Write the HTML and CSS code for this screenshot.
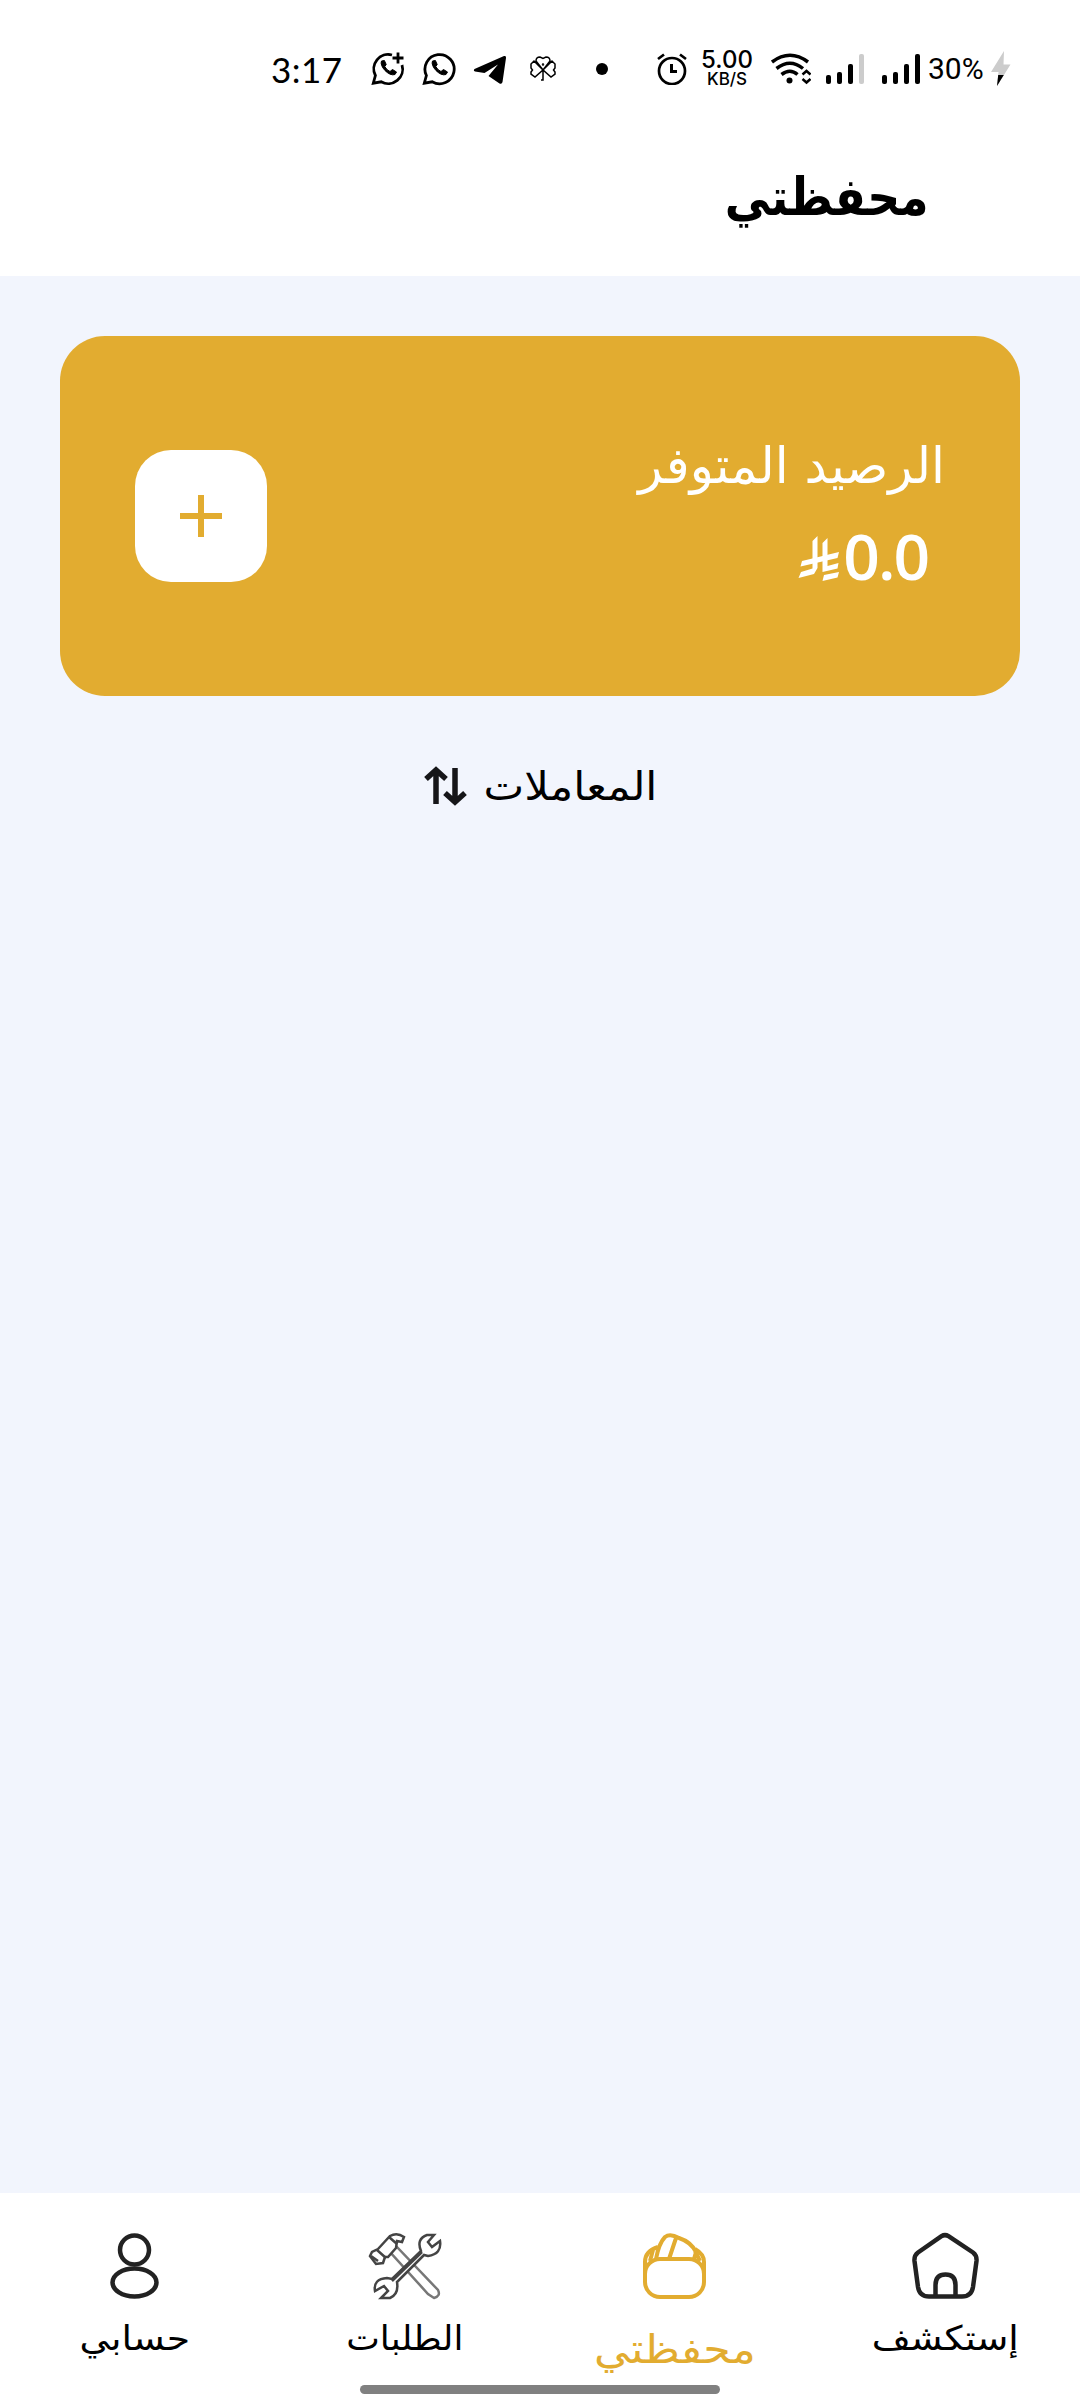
FILE: index.html
```html
<!DOCTYPE html>
<html lang="ar" dir="rtl">
<head>
    <meta charset="UTF-8">
    <meta name="viewport" content="width=device-width, initial-scale=1.0">
    <title>محفظتي</title>
    <link rel="stylesheet" href="styles.css">
</head>
<body>
    <header>
        <div class="status-bar" dir="ltr">
            <span class="clock">3:17</span>
            <svg class="whatsapp" width="34" height="34" viewBox="0 0 34 34" fill="none" stroke="#000" stroke-width="2.8">
                <path d="M21 3A14.4 14.4 0 0 0 4.400 23.500L2.300 31.200L10.200 29.800A14.400 14.400 0 0 0 31 13"/>
                <path d="M27 0.500V11.500M21.500 6H32.500"/>
                <path d="M10.500 9C8 14 18 25 24 22.500L25.500 20L21.500 17.500L19 19.500Q15.500 18 13.800 14.500L15.200 12.500L13.400 8.500Z" fill="#000" stroke="#000" stroke-width="1"/>
            </svg>
            <svg class="whatsapp" width="34" height="34" viewBox="0 0 34 34" fill="none" stroke="#000" stroke-width="2.8">
                <path d="M4.400 23.500A14.600 14.600 0 1 1 10.200 29.800L2.300 31.200Z"/>
                <path d="M10.500 9C8 14 18 25 24 22.500L25.500 20L21.500 17.500L19 19.500Q15.500 18 13.800 14.500L15.200 12.500L13.400 8.500Z" fill="#000" stroke="#000" stroke-width="1"/>
            </svg>
            <svg class="telegram" width="34" height="30" viewBox="0 0 34 30">
                <path d="M1.500 14L31 1Q33.500 0.500 33 3L29.500 27Q29 29.500 26.500 28.500L15.500 21L25 9.500L11.500 18L2 16.500Q0 15.500 1.500 14Z"/>
            </svg>
            <svg class="clover" width="28" height="28" viewBox="0 0 28 28" fill="none" stroke="#000" stroke-width="1.5">
                <path d="M14 15L7 6Q7 2 11 2L14 3.500L17 2Q21 2 21 6L14 15L23 6L26 9V13L24.500 15L26 17V19L22 22L14 15L6 22L2 19V17L3.500 15L2 13V9L5 6L14 15V25H12"/>
                <circle cx="14" cy="9.500" r="0.500"/>
            </svg>
            <span class="dot"></span>
            <svg class="alarm" width="30" height="32" viewBox="0 0 30 32" fill="none" stroke="#000" stroke-width="2.700">
                <circle cx="15" cy="18" r="13"/>
                <path d="M1 6L7 1.500M29 6L23 1.500"/>
                <path d="M14.500 11V18.500H20" stroke-width="3"/>
            </svg>
            <span class="speed"><b>5.00</b><small>KB/S</small></span>
            <svg class="wifi" width="40" height="32" viewBox="0 0 40 32" fill="none" stroke="#000" stroke-width="3.500">
                <path d="M1 9Q19 -4.500 37 9M5.500 15.500Q19 5 32 15.500M10.500 21.500Q19 15 26.500 21.500"/>
                <circle cx="18.500" cy="27.500" r="3" fill="#000" stroke="none"/>
                <path d="M31.500 21.500L35.500 18L39.500 21.500M31.500 26L35.500 29.500L39.500 26" stroke-width="2.500"/>
            </svg>
            <div class="signal weak"><i></i><i></i><i></i><i></i></div>
            <div class="signal"><i></i><i></i><i></i><i></i></div>
            <span class="battery">30%</span>
            <svg class="bolt" width="20" height="36" viewBox="0 0 20 36">
                <path d="M13 0L0 21H7.500L6 35L19.500 13.500H12.500Z" fill="#ccc"/>
                <path d="M7.200 24H12.800L6 35Z"/>
            </svg>
        </div>
        <h1><span>محفظتي</span></h1>
    </header>

    <main>
        <section class="card">
            <div class="balance">
                <p class="label"><span>الرصيد المتوفر</span></p>
                <p class="amount" dir="ltr">
                    <svg width="42" height="46" viewBox="0 0 42 46">
                        <path d="M14.500 6L19.500 1V33L16 39L0.500 43L3 37L14.500 33.500Z"/>
                        <path d="M24.500 8L29.500 3V31L40.500 28L39.500 33.500L24.500 37Z"/>
                        <path d="M4 26L41 17L39.500 23L2.500 31.500Z"/>
                        <path d="M26 40L41 37L39.500 42.500L24.500 46Z"/>
                    </svg>
                    <span>0.0</span>
                </p>
            </div>
            <button class="add" aria-label="إضافة">
                <svg width="42" height="42" viewBox="0 0 42 42" stroke="#e2ac30" stroke-width="6">
                    <path d="M21 0V42M0 21H42"/>
                </svg>
            </button>
        </section>
        <div class="transactions">
            <h2><span>المعاملات</span></h2>
            <svg width="44" height="40" viewBox="0 0 44 40" fill="none" stroke="#161619" stroke-width="5.500">
                <path d="M12 38V4M2 13L12 4L22 13M31 2V36M21 27L31 36L41 27"/>
            </svg>
        </div>
    </main>

    <nav>
        <a class="explore">
            <svg width="68" height="68" viewBox="0 0 68 68" fill="none" stroke="#222" stroke-width="4.500">
                <path d="M30.500 4.200Q34 2 37.500 4.200L62 20.500Q66 23.500 65.500 29L62 55Q60.500 64.500 51 64.500H18Q8.500 64.500 7 55L3.500 29Q3 23.500 7 20.500Z"/>
                <path d="M24.500 64V53Q24.500 42.500 34.500 42.500Q44.500 42.500 44.500 53V64"/>
            </svg>
            <span>إستكشف</span>
        </a>
        <a class="wallet active">
            <svg width="68" height="68" viewBox="0 0 68 68" fill="none" stroke="#e2ac30" stroke-width="4">
                <rect x="4" y="27" width="59" height="38" rx="15"/>
                <path d="M4 42V30Q4 19 17 15M63 42V30Q63 22 54 17"/>
                <path d="M15 27Q18 11 24 5Q29 1 38 6Q50 10 55 20L53 27M35 6L28 27M12 18L9 29M54 19L59 29"/>
            </svg>
            <span>محفظتي</span>
        </a>
        <a class="orders">
            <svg width="74" height="68" viewBox="0 0 74 68" fill="#fff" stroke="#444" stroke-width="2.500">
                <path d="M22 20L28 14L70 58Q73 64 66 66L60 62Z" stroke="#777"/>
                <path d="M10 17L22 4Q29 0 36 5L34 10L29 9L28 16L20 25L17 25L15 31L8 32L2 24L4 20Z"/>
                <path d="M9 18L18 26M21 5L29 12M3 24L10 29" fill="none"/>
                <path d="M53 19Q48 7 59 3L66 3L60 10L64 15L72 9Q74 22 60 24L56 23L29 50Q31 62 22 66L13 66L20 59L16 54L7 59Q5 47 19 46L24 47Z"/>
                <path d="M54 20L24 49" fill="none"/>
            </svg>
            <span>الطلبات</span>
        </a>
        <a class="account">
            <svg width="52" height="68" viewBox="0 0 52 68" fill="none" stroke="#222" stroke-width="4.500">
                <circle cx="25.500" cy="18" r="14.500"/>
                <ellipse cx="25.500" cy="50.500" rx="22" ry="14"/>
            </svg>
            <span>حسابي</span>
        </a>
        <div class="home-bar"></div>
    </nav>
</body>
</html>
```
FILE: styles.css
```css
* {
    box-sizing: border-box;
    margin: 0;
    padding: 0;
}

body {
    width: 1080px;
    height: 2400px;
    display: flex;
    flex-direction: column;
    background: #f2f5fd;
    color: #000;
    font-family: 'DejaVu Sans', sans-serif;
    overflow: hidden;
}

svg {
    display: block;
    flex-shrink: 0;
}

header {
    height: 276px;
    background: #fff;
}

/* Status bar */
.status-bar {
    display: flex;
    align-items: center;
    height: 138px;
    padding-left: 271px;
    font-family: 'Lato', sans-serif;
}

.clock {
    width: 100px;
    font-size: 35px;
    line-height: 40px;
    letter-spacing: 0.5px;
}

.whatsapp {
    margin-right: 17px;
}

.telegram {
    margin: 2px 22px 0 0;
}

.dot {
    width: 12px;
    height: 12px;
    margin: 0 49px 0 39px;
    border-radius: 50%;
    background: #000;
}

.speed {
    width: 54px;
    margin: 0 17px 0 13px;
    padding-top: 1px;
    font-family: 'Inter', sans-serif;
    text-align: center;
}

.speed b,
.speed small {
    display: block;
    font-weight: 500;
}

.speed b {
    font-size: 24px;
    line-height: 20px;
}

.speed small {
    font-size: 17px;
    line-height: 19px;
}

.signal {
    display: flex;
    align-items: flex-end;
    gap: 6px;
    height: 30px;
    margin-left: 18px;
}

.signal.weak {
    margin-left: 15px;
}

.signal i {
    width: 5px;
    height: 9px;
    border-radius: 2px;
    background: #000;
}

.signal i:nth-child(2) {
    height: 12px;
}

.signal i:nth-child(3) {
    height: 20px;
}

.signal i:nth-child(4) {
    height: 30px;
}

.signal.weak i:nth-child(4) {
    background: #ccc;
}

.battery {
    width: 63px;
    margin-left: 8px;
    font-family: 'Roboto', sans-serif;
    font-size: 30px;
    line-height: 36px;
}

/* Page title */
h1 {
    padding: 2px 151px 0 0;
    font-size: 52px;
    line-height: 114px;
}

h1 span,
h2 span,
.label span,
nav span {
    display: inline-block;
    white-space: nowrap;
}

h1 span {
    transform: scaleX(0.88);
    transform-origin: right;
}

main {
    flex: 1;
    padding: 60px;
}

/* Balance card */
.card {
    display: flex;
    justify-content: space-between;
    align-items: center;
    height: 360px;
    padding: 0 75px;
    border-radius: 45px;
    background: #e2ac30;
    color: #fff;
}

.label {
    margin-top: -6px;
    font-size: 50px;
    line-height: 80px;
}

.amount {
    display: flex;
    justify-content: flex-end;
    align-items: center;
    gap: 3px;
    margin-top: 5px;
    padding-right: 17px;
    font-family: 'Open Sans', sans-serif;
    font-size: 64px;
    font-weight: 600;
    line-height: 90px;
    letter-spacing: -2px;
}

.amount svg {
    margin-top: 4px;
    fill: #fff;
}

.add {
    display: flex;
    justify-content: center;
    align-items: center;
    width: 132px;
    height: 132px;
    border: none;
    border-radius: 36px;
    background: #fff;
}

.transactions {
    display: flex;
    justify-content: center;
    align-items: center;
    gap: 22px;
    height: 60px;
    margin-top: 60px;
}

h2 {
    padding-right: 6px;
    font-size: 40px;
    font-weight: normal;
}

h2 span {
    transform: scaleX(1.08);
}

/* Bottom navigation */
nav {
    position: relative;
    display: grid;
    grid-template-columns: repeat(4, 1fr);
    height: 207px;
    background: #fff;
}

nav a {
    display: flex;
    flex-direction: column;
    align-items: center;
    padding-top: 39px;
}

nav span {
    margin-top: 13px;
    font-size: 34px;
    line-height: 50px;
    transform: scaleX(1.11);
}

nav .orders span {
    transform: scaleX(1.05);
}

nav .active span {
    margin-top: 24px;
    font-size: 40px;
    color: #e2ac30;
    transform: scaleX(1.11);
}

.home-bar {
    position: absolute;
    left: 360px;
    bottom: 6px;
    width: 360px;
    height: 9px;
    border-radius: 5px;
    background: #808080;
}
```
